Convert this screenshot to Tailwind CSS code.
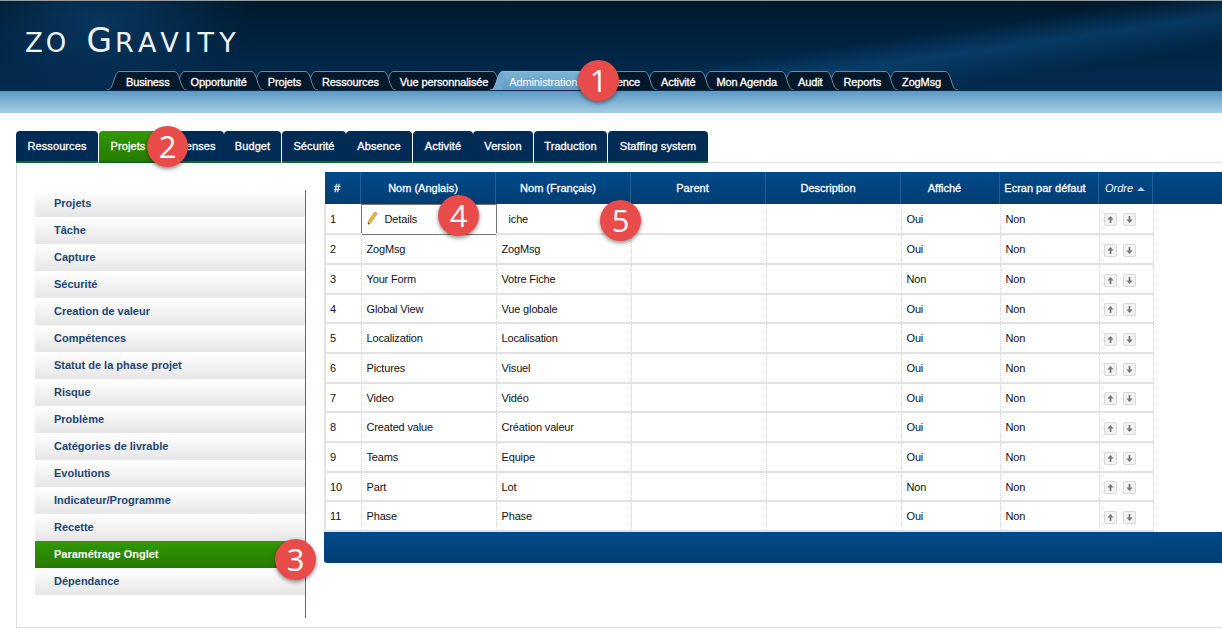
<!DOCTYPE html>
<html lang="en">
<head>
    <meta charset="UTF-8">
    <title>zO Gravity</title>
    <script src="https://cdn.jsdelivr.net/npm/@tailwindcss/browser@4"></script>
</head>
<body class="relative h-[640px] overflow-hidden bg-white font-['Liberation_Sans',Arial,sans-serif]">
    <!-- header -->
    <div class="flex h-[91px] flex-col justify-between border-t border-t-[#9a9a9a] border-b border-b-[#0c2a42] bg-[radial-gradient(ellipse_150px_70px_at_100px_20px,#0a3c68cc,transparent),linear-gradient(172deg,transparent_62%,#0d4a7d99_72%,transparent_84%),linear-gradient(180deg,#001a2d_0%,#012544_60%,#032c50_100%)]">
        <div class="pl-[25px] pt-[25px] font-['DejaVu_Sans',sans-serif] uppercase leading-[30px] text-[#eef2f5]">
            <span class="text-[26px] tracking-[3px]">zO</span> <span class="ml-[12px] text-[33px]">G</span><span class="ml-[3px] text-[27px] tracking-[5.4px]">ravity</span>
        </div>
        <div id="main-tabs" class="flex h-[19px] pl-[107px]"></div>
    </div>
    <div class="h-[22px] bg-linear-to-b from-[#5b99c3] to-[#a5cde3]"></div>

    <!-- admin tabs -->
    <div class="ml-[16px] mt-[18px] flex h-[32px] text-center text-[11px] leading-[31px] tracking-[0.1px] text-white [-webkit-text-stroke:0.3px_white]">
        <div class="w-[82px] rounded-t-[4px] border-b-2 border-[#17662c] bg-[#002b55]">Ressources</div>
        <div class="ml-px w-[58px] rounded-t-[4px] border-b-2 border-[#17662c] bg-linear-to-b from-[#2f9900] to-[#277c00]">Projets</div>
        <div class="w-[67px] rounded-t-[4px] border-b-2 border-[#17662c] bg-[#002b55]">Dépenses</div>
        <div class="w-[57px] rounded-t-[4px] border-b-2 border-[#17662c] bg-[#002b55]">Budget</div>
        <div class="ml-px w-[64px] rounded-t-[4px] border-b-2 border-[#17662c] bg-[#002b55]">Sécurité</div>
        <div class="w-[66px] rounded-t-[4px] border-b-2 border-[#17662c] bg-[#002b55]">Absence</div>
        <div class="ml-px w-[60px] rounded-t-[4px] border-b-2 border-[#17662c] bg-[#002b55]">Activité</div>
        <div class="w-[60px] rounded-t-[4px] border-b-2 border-[#17662c] bg-[#002b55]">Version</div>
        <div class="ml-px w-[73px] rounded-t-[4px] border-b-2 border-[#17662c] bg-[#002b55]">Traduction</div>
        <div class="ml-px w-[100px] rounded-t-[4px] border-b-2 border-[#17662c] bg-[#002b55]">Staffing system</div>
    </div>

    <!-- panel -->
    <div class="-mt-px ml-[16px] flex h-[466px] border border-[#dcdcdc] border-r-0 pl-[18px]">
        <div class="mt-[27px] h-[428px] w-[271px] flex-none border-r border-[#3f8f1f]">
            <ul id="side-menu" class="text-[11px] font-bold text-[#1d4570]"></ul>
        </div>
        <div class="ml-[18px] mt-[9px] flex-1">
            <table class="w-full table-fixed border-collapse text-[11px] tracking-[-0.15px] text-[#111]">
                <colgroup>
                    <col class="w-[36px]"><col class="w-[135px]"><col class="w-[135px]"><col class="w-[135px]">
                    <col class="w-[135px]"><col class="w-[99px]"><col class="w-[99px]"><col class="w-[54px]"><col>
                </colgroup>
                <thead>
                    <tr class="h-[32px] bg-linear-to-b from-[#004a8a] to-[#023d72] font-normal text-white [-webkit-text-stroke:0.3px_white]">
                        <th class="pr-[12px] font-normal shadow-[inset_-1px_0_0_#1f5f9a]">#</th>
                        <th class="pr-[11px] font-normal tracking-normal shadow-[inset_-1px_0_0_#1f5f9a]">Nom (Anglais)</th>
                        <th class="pr-[11px] font-normal tracking-normal shadow-[inset_-1px_0_0_#1f5f9a]">Nom (Français)</th>
                        <th class="pr-[12px] font-normal tracking-normal shadow-[inset_-1px_0_0_#1f5f9a]">Parent</th>
                        <th class="pr-[11px] font-normal tracking-normal shadow-[inset_-1px_0_0_#1f5f9a]">Description</th>
                        <th class="pr-[12px] font-normal tracking-normal shadow-[inset_-1px_0_0_#1f5f9a]">Affiché</th>
                        <th class="pr-[9px] font-normal tracking-normal shadow-[inset_-1px_0_0_#1f5f9a]">Ecran par défaut</th>
                        <th class="pr-[2px] font-normal italic tracking-normal shadow-[inset_-1px_0_0_#1f5f9a] [-webkit-text-stroke:0]">Ordre <span class="ml-px inline-block h-0 w-0 border-x-[4px] border-b-[4px] border-x-transparent border-b-[#b8cde0] align-middle"></span></th>
                        <th></th>
                    </tr>
                </thead>
                <tbody id="rows"></tbody>
            </table>
            <div class="h-[31px] rounded-bl-[3px] bg-linear-to-b from-[#004a8a] to-[#023d72]"></div>
        </div>
    </div>

    <!-- numbered callouts -->
    <div class="absolute left-[578px] top-[60px] z-50 flex h-[41px] w-[41px] items-center justify-center rounded-full bg-[#e94b4b] font-['Open_Sans',sans-serif] text-[31px] text-white shadow-[0_2px_4px_rgba(0,0,0,0.45)]">1</div>
    <div class="absolute left-[147px] top-[126px] z-50 flex h-[41px] w-[41px] items-center justify-center rounded-full bg-[#e94b4b] font-['Open_Sans',sans-serif] text-[31px] text-white shadow-[0_2px_4px_rgba(0,0,0,0.45)]">2</div>
    <div class="absolute left-[275px] top-[539px] z-50 flex h-[41px] w-[41px] items-center justify-center rounded-full bg-[#e94b4b] font-['Open_Sans',sans-serif] text-[31px] text-white shadow-[0_2px_4px_rgba(0,0,0,0.45)]">3</div>
    <div class="absolute left-[438px] top-[195px] z-50 flex h-[41px] w-[41px] items-center justify-center rounded-full bg-[#e94b4b] font-['Open_Sans',sans-serif] text-[31px] text-white shadow-[0_2px_4px_rgba(0,0,0,0.45)]">4</div>
    <div class="absolute left-[600px] top-[200px] z-50 flex h-[41px] w-[41px] items-center justify-center rounded-full bg-[#e94b4b] font-['Open_Sans',sans-serif] text-[31px] text-white shadow-[0_2px_4px_rgba(0,0,0,0.45)]">5</div>

    <script>
        // top navigation, earlier tabs sit over later ones
        const mainTabs = ['Business', 'Opportunité', 'Projets', 'Ressources', 'Vue personnalisée', 'Administration', 'Absence', 'Activité', 'Mon Agenda', 'Audit', 'Reports', 'ZogMsg'];
        document.getElementById('main-tabs').innerHTML = mainTabs.map((name, i) => {
            const active = name === 'Administration';
            const fill = active ? '#6fa8cd' : '#04182b';
            const line = active ? '#8fbcd8' : '#6d8a9f';
            return `<div class="relative flex flex-none ${i ? '-ml-[15px]' : ''}" style="z-index:${active ? 40 : 30 - i}">
                <svg width="13" height="19" class="block flex-none"><path d="M0 19C4 19 5 15 7 9C9 3 10 .5 13 .5V19Z" fill="${fill}"/><path d="M0 19C4 19 5 15 7 9C9 3 10 .5 13 .5" fill="none" stroke="${line}"/></svg>
                <span class="${active ? 'bg-linear-to-b from-[#7db2d3] to-[#5f9cc5] border-t-[#8fbcd8]' : 'bg-[#04182b] border-t-[#6d8a9f] [-webkit-text-stroke:0.3px_white]'} border-t pl-[6px] pr-[4px] text-[11px] leading-[20px] tracking-[-0.13px] text-white">${name}</span>
                <svg width="13" height="19" class="block flex-none"><path d="M13 19C9 19 8 15 6 9C4 3 3 .5 0 .5V19Z" fill="${fill}"/><path d="M13 19C9 19 8 15 6 9C4 3 3 .5 0 .5" fill="none" stroke="${line}"/></svg>
            </div>`;
        }).join('');

        const menu = ['Projets', 'Tâche', 'Capture', 'Sécurité', 'Creation de valeur', 'Compétences', 'Statut de la phase projet', 'Risque', 'Problème', 'Catégories de livrable', 'Evolutions', 'Indicateur/Programme', 'Recette', 'Paramétrage Onglet', 'Dépendance'];
        document.getElementById('side-menu').innerHTML = menu.map(name => {
            const look = name === 'Paramétrage Onglet'
                ? 'from-[#2f9900] to-[#277a00] text-white'
                : 'from-white to-[#e6e6e6]';
            return `<li class="h-[27px] bg-linear-to-b pl-[19px] leading-[26px] ${look}">${name}</li>`;
        }).join('');

        // row heights alternate so the lines fall where the original's do
        const rows = [
            ['Details', 'iche', 'Oui', 'Non', 'h-[30px]'],
            ['ZogMsg', 'ZogMsg', 'Oui', 'Non', 'h-[30px]'],
            ['Your Form', 'Votre Fiche', 'Non', 'Non', 'h-[30px]'],
            ['Global View', 'Vue globale', 'Oui', 'Non', 'h-[29px]'],
            ['Localization', 'Localisation', 'Oui', 'Non', 'h-[30px]'],
            ['Pictures', 'Visuel', 'Oui', 'Non', 'h-[30px]'],
            ['Video', 'Vidéo', 'Oui', 'Non', 'h-[29px]'],
            ['Created value', 'Création valeur', 'Oui', 'Non', 'h-[30px]'],
            ['Teams', 'Equipe', 'Oui', 'Non', 'h-[30px]'],
            ['Part', 'Lot', 'Non', 'Non', 'h-[29px]'],
            ['Phase', 'Phase', 'Oui', 'Non', 'h-[30px]']
        ];
        const cell = 'border-r border-b-2 border-r-[#d4d4d4] border-b-[#e2e2e2] [border-style:none_dotted_solid_none] px-[5px] pt-px';
        const firstCell = 'border-l-2 border-r border-b-2 border-l-[#e2e2e2] border-r-[#d4d4d4] border-b-[#e2e2e2] [border-style:none_dotted_solid_solid] pl-[4px] pt-px';
        const upBtn = '<span class="inline-flex h-[13px] w-[13px] items-center justify-center rounded-[2px] border border-[#d8d8d8] bg-[#f2f2f2] align-middle"><svg width="7" height="7" viewBox="0 0 8 8"><path d="M4 0L7.5 4H5V8H3V4H.5Z" fill="#777"/></svg></span>';
        const downBtn = '<span class="ml-[6px] inline-flex h-[13px] w-[13px] items-center justify-center rounded-[2px] border border-[#d8d8d8] bg-[#f2f2f2] align-middle"><svg width="7" height="7" viewBox="0 0 8 8"><path d="M4 8L7.5 4H5V0H3V4H.5Z" fill="#777"/></svg></span>';
        const pencil = '<svg width="11" height="14" viewBox="0 0 10 13" class="mr-[7px] inline-block align-[-2px]"><path d="M6.5 1.5L9 3 3.5 11 .8 12.5 1 9.5Z" fill="#eeb33e" stroke="#b9852a" stroke-width=".5"/><path d="M6.5 1.5L7.3.4 9.6 1.8 9 3Z" fill="#e58a9a"/><path d="M.8 12.5L1 10.6 2.4 11.6Z" fill="#444"/></svg>';
        document.getElementById('rows').innerHTML = rows.map((r, i) => {
            const first = i === 0;
            const nameCell = first
                ? `<td class="border border-[#777] px-[5px] pt-px">${pencil}${r[0]}</td>`
                : `<td class="${cell}">${r[0]}</td>`;
            const frCell = first
                ? `<td class="${cell} pl-[12px]">${r[1]}</td>`
                : `<td class="${cell}">${r[1]}</td>`;
            return `<tr class="${r[4]}">
                <td class="${firstCell}">${i + 1}</td>${nameCell}${frCell}
                <td class="${cell}"></td><td class="${cell}"></td>
                <td class="${cell}">${r[2]}</td><td class="${cell}">${r[3]}</td>
                <td class="${cell} whitespace-nowrap pl-[4px]">${upBtn}${downBtn}</td><td></td>
            </tr>`;
        }).join('');
    </script>
</body>
</html>
